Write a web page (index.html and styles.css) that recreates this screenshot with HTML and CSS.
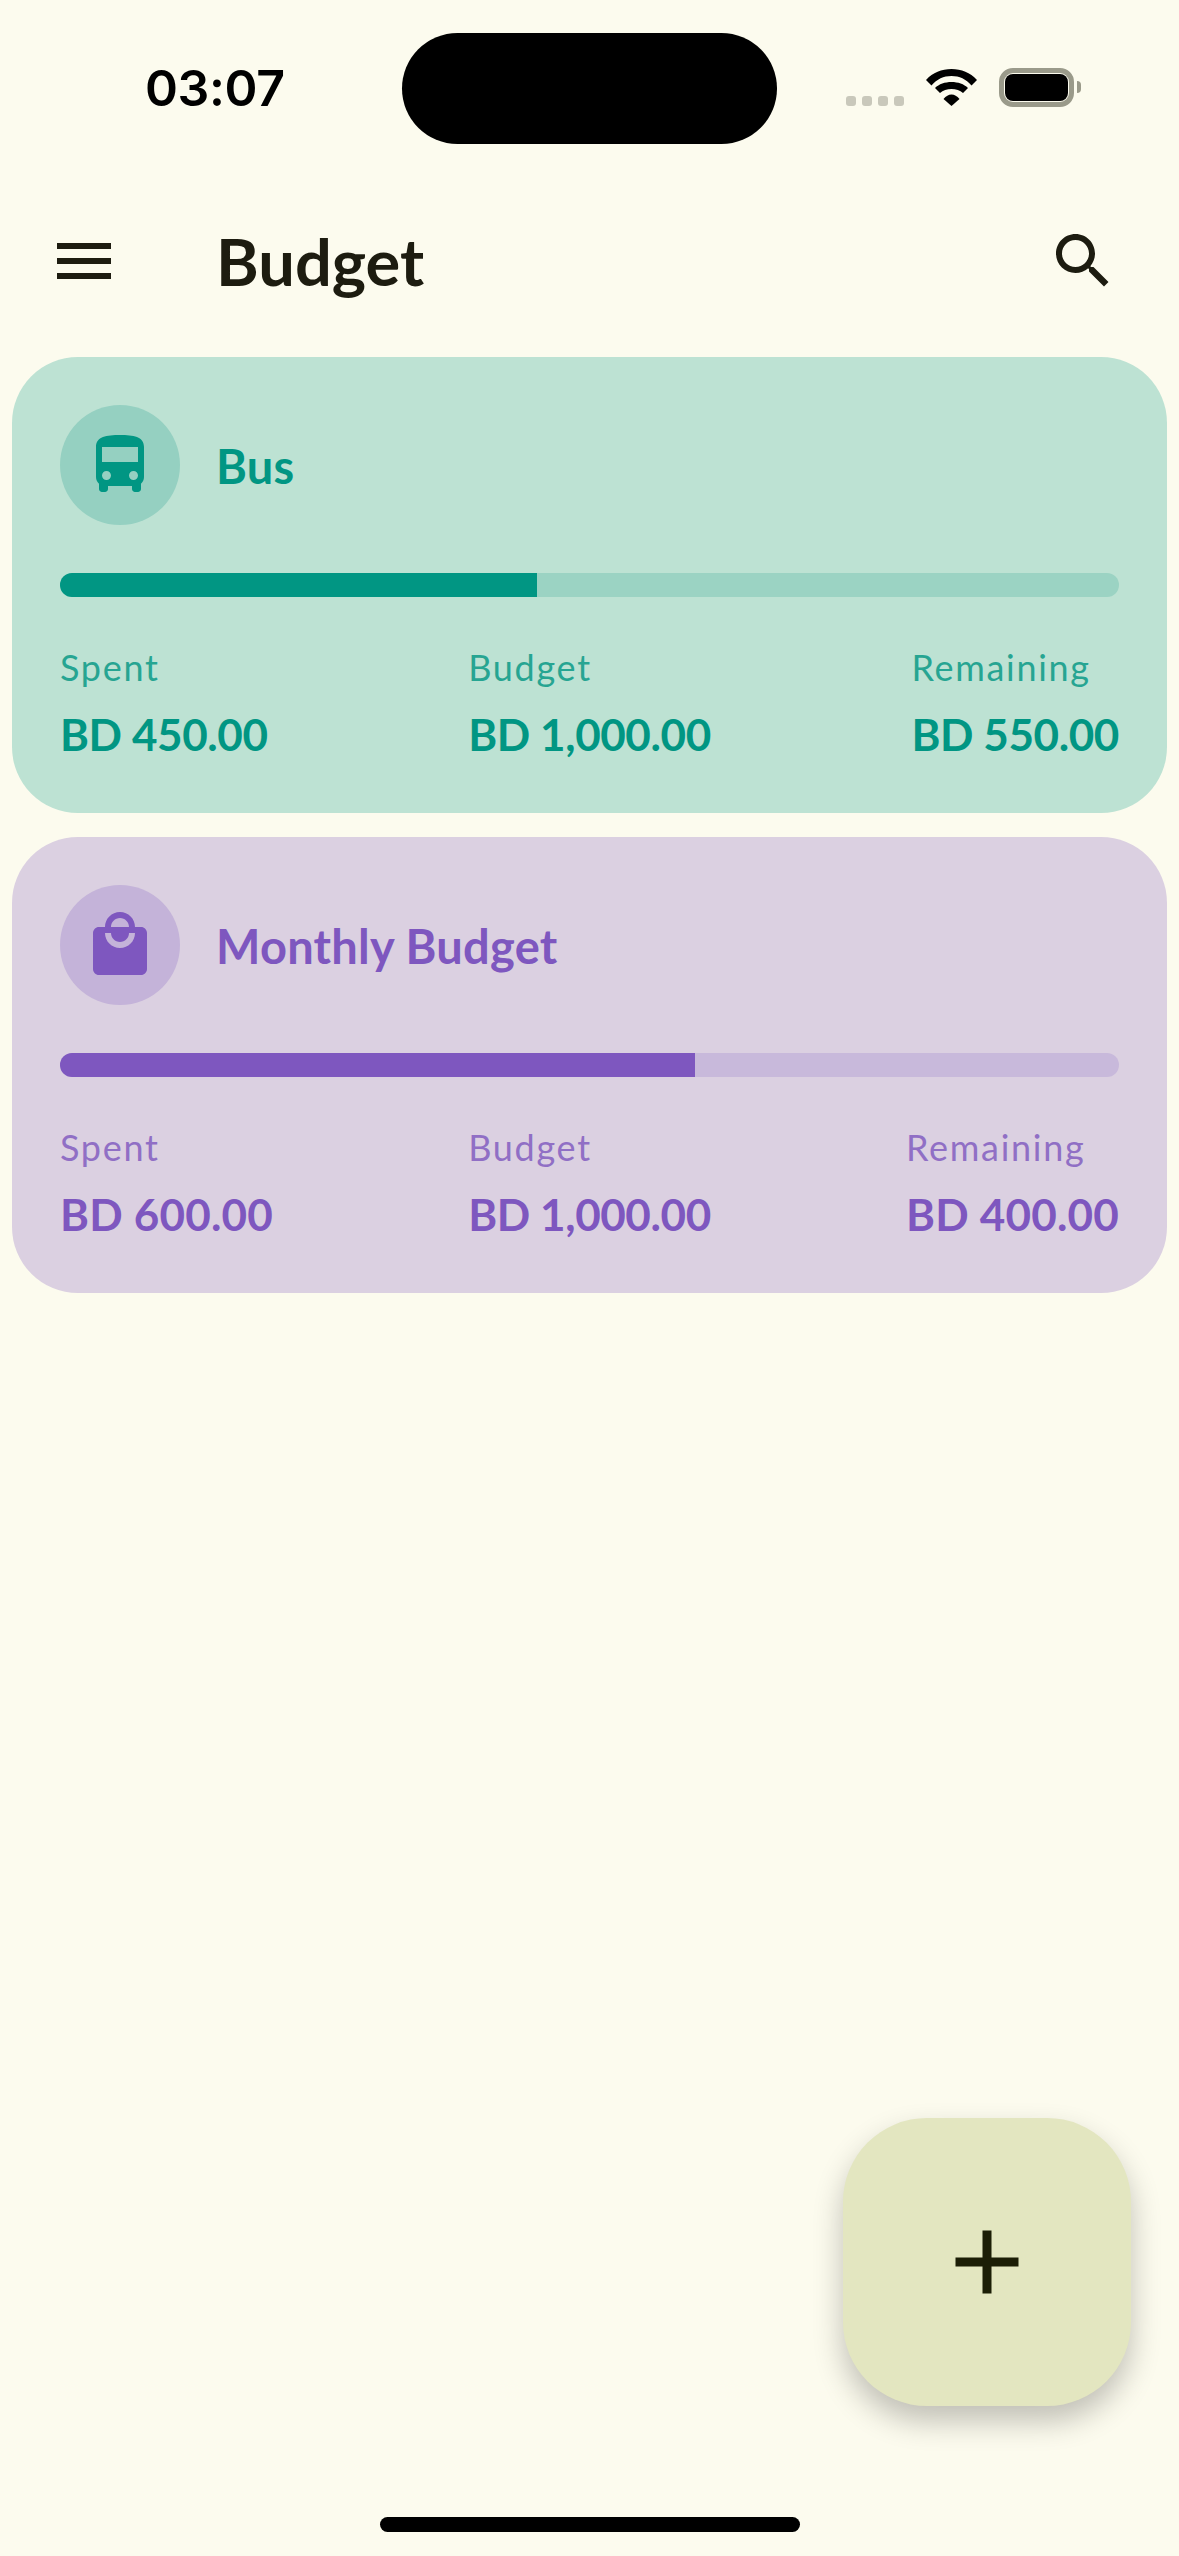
FILE: index.html
```html
<!DOCTYPE html>
<html lang="en">
<head>
  <meta charset="UTF-8" />
  <meta name="viewport" content="width=device-width, initial-scale=1.0" />
  <title>Budget</title>
  <link rel="stylesheet" href="styles.css">
</head>
<body>
  <!-- Status bar -->
  <div class="status-bar">
    <span class="time">03:07</span>
    <div class="island"></div>
    <div class="status-icons">
      <div class="signal"><i></i><i></i><i></i><i></i></div>
      <svg class="wifi" viewBox="0 0 51 38">
        <path d="M0 12C7 4.5 15.5 1 25.5 1S44 4.5 51 12L45.5 17.5C40 11 33.5 8 25.5 8S11 11 5.5 17.5Z"/>
        <path d="M9 20C13 16 19 14 25.5 14S38 16 42 20L37 25C34 22.5 30 21 25.5 21S17 22.5 14 25Z"/>
        <path d="M17.5 31C20 28 22.5 26.5 25.5 26.5S31 28 33.5 31L25.5 38Z"/>
      </svg>
      <div class="battery"><div class="battery-fill"></div></div>
      <div class="battery-nub"></div>
    </div>
  </div>

  <!-- Top bar -->
  <header class="app-bar">
    <svg class="icon" viewBox="0 0 24 24"><path d="M3 18h18v-2H3v2zm0-5h18v-2H3v2zm0-7v2h18V6H3z"/></svg>
    <h1>Budget</h1>
    <svg class="icon" viewBox="0 0 24 24"><path d="M15.500 14h-.79l-.28-.27C15.410 12.590 16 11.110 16 9.500 16 5.910 13.090 3 9.500 3S3 5.910 3 9.500 5.910 16 9.500 16c1.610 0 3.090-.59 4.230-1.570l.27.28v.79l5 4.990L20.490 19l-4.990-5zm-6 0C7.010 14 5 11.990 5 9.500S7.010 5 9.500 5 14 7.010 14 9.500 11.990 14 9.500 14z"/></svg>
  </header>

  <main class="cards">
    <section class="card teal">
      <div class="card-head">
        <div class="badge">
          <svg class="icon" viewBox="0 0 24 24"><path d="M4 16c0 .88.39 1.670 1 2.220V20c0 .55.45 1 1 1h1c.55 0 1-.45 1-1v-1h8v1c0 .55.45 1 1 1h1c.55 0 1-.45 1-1v-1.780c.61-.55 1-1.340 1-2.220V6c0-3.500-3.580-4-8-4s-8 .5-8 4v10zm3.500 1c-.83 0-1.500-.67-1.500-1.500S6.670 14 7.500 14s1.500.67 1.500 1.500S8.330 17 7.500 17zm9 0c-.83 0-1.500-.67-1.500-1.500s.67-1.500 1.500-1.500 1.500.67 1.500 1.500-.67 1.500-1.500 1.500zm1.500-6H6V6h12v5z"/></svg>
        </div>
        <h2>Bus</h2>
      </div>
      <div class="track"><div class="fill" style="width: 45%"></div></div>
      <div class="stats">
        <div><p class="label">Spent</p><p class="amount">BD 450.00</p></div>
        <div><p class="label">Budget</p><p class="amount">BD 1,000.00</p></div>
        <div><p class="label">Remaining</p><p class="amount">BD 550.00</p></div>
      </div>
    </section>

    <section class="card purple">
      <div class="card-head">
        <div class="badge">
          <svg class="icon" viewBox="0 0 24 24"><path d="M19 6h-2c0-2.760-2.240-5-5-5S7 3.240 7 6H5c-1.100 0-1.990.9-1.990 2L3 20c0 1.100.9 2 2 2h14c1.100 0 2-.9 2-2V8c0-1.100-.9-2-2-2zm-7-3c1.660 0 3 1.340 3 3H9c0-1.660 1.340-3 3-3zm0 10c-2.760 0-5-2.240-5-5h2c0 1.660 1.340 3 3 3s3-1.340 3-3h2c0 2.760-2.240 5-5 5z"/></svg>
        </div>
        <h2>Monthly Budget</h2>
      </div>
      <div class="track"><div class="fill" style="width: 60%"></div></div>
      <div class="stats">
        <div><p class="label">Spent</p><p class="amount wide">BD 600.00</p></div>
        <div><p class="label">Budget</p><p class="amount">BD 1,000.00</p></div>
        <div><p class="label">Remaining</p><p class="amount wide">BD 400.00</p></div>
      </div>
    </section>
  </main>

  <button class="fab">
    <svg viewBox="0 0 24 24"><path d="M19 13h-6v6h-2v-6H5v-2h6V5h2v6h6v2z"/></svg>
  </button>

  <div class="home-bar"></div>
</body>
</html>
```

FILE: styles.css
```css
body {
  margin: 0;
  height: 2556px;
  display: flex;
  flex-direction: column;
  background: #fcfbee;
  color: #1d1c10;
  font-family: 'Lato', sans-serif;
}

/* Status bar */
.status-bar {
  display: flex;
  align-items: flex-start;
  height: 144px;
  padding: 33px 98px 0 145px;
  box-sizing: border-box;
}
.time {
  width: 257px;
  margin-top: 25px;
  font-family: 'Inter', sans-serif;
  font-size: 50px;
  font-weight: 600;
  letter-spacing: -0.4px;
  line-height: 60px;
  color: #000;
}
.island {
  width: 376px;
  height: 111px;
  border-radius: 56px;
  background: #000;
}
.status-icons {
  display: flex;
  align-items: flex-start;
  margin-left: 69px;
  margin-top: 35px;
}
.signal {
  display: flex;
  gap: 6px;
  margin-top: 28px;
}
.signal i {
  width: 10px;
  height: 10px;
  border-radius: 3px;
  background: #c9c8bb;
}
.wifi {
  width: 51px;
  height: 38px;
  margin-left: 22px;
  fill: #000;
}
.battery {
  width: 75px;
  height: 39px;
  margin-left: 22px;
  padding: 1px;
  box-sizing: border-box;
  border: 5px solid #9a9a8a;
  border-radius: 14px;
}
.battery-fill {
  height: 100%;
  border-radius: 8px;
  background: #000;
}
.battery-nub {
  width: 4px;
  height: 12px;
  margin: 13px 0 0 3px;
  border-radius: 0 6px 6px 0;
  background: #9a9a8a;
}

/* Top bar */
.app-bar {
  display: flex;
  align-items: center;
  height: 72px;
  margin-top: 81px;
  padding: 0 60px 0 48px;
}
.app-bar h1 {
  flex: 1;
  margin: 0 0 0 96px;
  font-size: 65px;
  font-weight: 700;
  line-height: 72px;
}
.icon {
  width: 72px;
  height: 72px;
  fill: currentColor;
}

/* Cards */
.cards {
  display: flex;
  flex-direction: column;
  gap: 24px;
  margin-top: 60px;
  padding: 0 12px;
  flex: 1;
}
.card {
  height: 456px;
  box-sizing: border-box;
  padding: 48px;
  border-radius: 66px;
}
.card.teal {
  background: #bde2d3;
  --accent: #019683;
  --badge: #95d0c1;
  --track: #9bd3c3;
}
.card.purple {
  background: #dbd0e1;
  --accent: #7e57bf;
  --badge: #c4b3d9;
  --track: #c8b9db;
}
.card-head {
  display: flex;
  align-items: center;
  gap: 36px;
}
.badge {
  display: flex;
  align-items: center;
  justify-content: center;
  width: 120px;
  height: 120px;
  border-radius: 50%;
  background: var(--badge);
  color: var(--accent);
}
.card-head h2 {
  margin: 2px 0 0;
  font-size: 47px;
  font-weight: 700;
  letter-spacing: 0.25px;
  color: var(--accent);
}
.track {
  height: 24px;
  margin-top: 48px;
  border-radius: 12px;
  overflow: hidden;
  background: var(--track);
}
.fill {
  height: 100%;
  background: var(--accent);
}
.stats {
  display: flex;
  justify-content: space-between;
  margin-top: 48px;
}
.label {
  margin: 0;
  font-size: 36px;
  line-height: 44px;
  letter-spacing: 1.7px;
  color: var(--accent);
  opacity: 0.8;
}
.amount {
  margin: 21px 0 0;
  font-size: 44px;
  font-weight: 700;
  line-height: 48px;
  letter-spacing: -0.4px;
  color: var(--accent);
}
.amount.wide {
  letter-spacing: 0.2px;
}

/* Add button */
.fab {
  align-self: flex-end;
  display: flex;
  align-items: center;
  justify-content: center;
  width: 288px;
  height: 288px;
  margin-right: 48px;
  padding: 0;
  border: none;
  border-radius: 84px;
  background: #e3e6c0;
  box-shadow: 0 15px 30px rgba(0, 0, 0, 0.24);
}
.fab svg {
  width: 108px;
  height: 108px;
  fill: #1c1e06;
}

.home-bar {
  width: 420px;
  height: 15px;
  margin: 111px auto 24px;
  border-radius: 8px;
  background: #000;
}
```
